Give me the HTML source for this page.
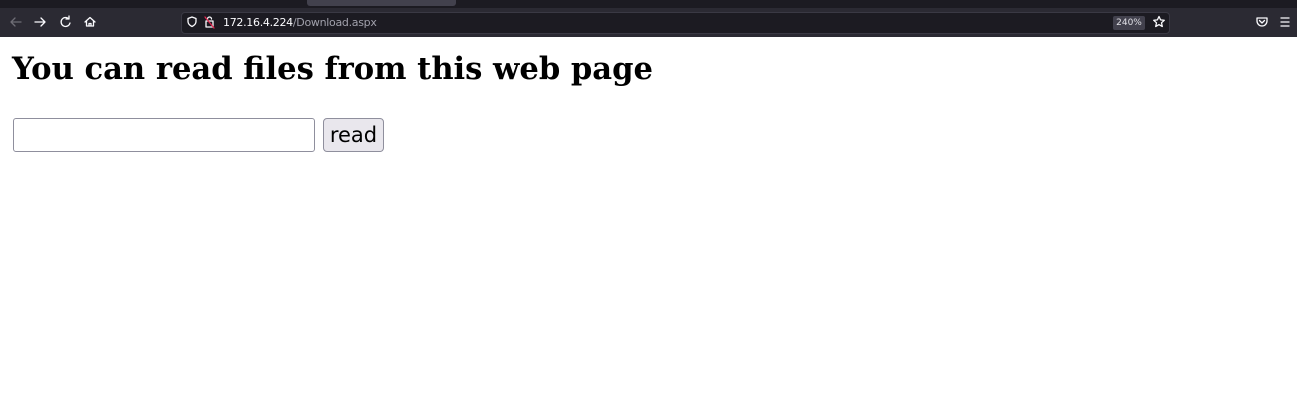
<!DOCTYPE html>
<html><head><style>
*{margin:0;padding:0;box-sizing:border-box}
body{width:1297px;height:403px;background:#fff;position:relative;overflow:hidden;font-family:"DejaVu Sans",sans-serif}
.tabs{position:absolute;left:0;top:0;width:1297px;height:8px;background:#1c1b22}
.tab{position:absolute;left:307px;top:0;width:149px;height:6px;background:#42414d;border-radius:0 0 3px 3px}
.tb{position:absolute;left:0;top:8px;width:1297px;height:29px;background:#2b2a33}
.url{position:absolute;left:181px;top:12px;width:989px;height:22px;background:#1c1b22;border:1px solid #3a3944;border-radius:4px}
.ut{position:absolute;left:223px;top:16px;font:11px "DejaVu Sans",sans-serif;color:#fbfbfe;letter-spacing:-0.3px}
.ut span{color:#a0a0ab}
.zoom{position:absolute;left:1113px;top:16px;width:32px;height:14px;background:#42414d;color:#e0e0e6;font:9px "DejaVu Sans",sans-serif;text-align:center;line-height:14px;border-radius:2px}
svg{position:absolute}
h1{position:absolute;left:12px;top:51px;font:bold 30.6px "DejaVu Serif",serif;white-space:nowrap}
.in{position:absolute;left:13px;top:118px;width:302px;height:34px;border:1px solid #8f8f9d;border-radius:3px}
.bt{position:absolute;left:323px;top:118px;width:61px;height:34px;border:1px solid #8f8f9d;border-radius:4px;background:#e9e7ed;font-size:21px;text-align:center;line-height:33px}
</style></head><body>
<div class="tabs"><div class="tab"></div></div>
<div class="tb"></div>
<div class="url"></div>
<svg width="1297" height="37" style="left:0;top:0" fill="none" stroke-width="1.3" stroke-linecap="round" stroke-linejoin="round">
<path d="M11 22h10M11 22l4-4M11 22l4 4" stroke="#6e6d75"/>
<path d="M35 22h10M45 22l-4-4M45 22l-4 4" stroke="#fbfbfe"/>
<path d="M69 19a4.5 4.5 0 1 0 1 4M69 16v3h-3" stroke="#fbfbfe"/>
<path d="M85 22l5-4.5 5 4.5M86.5 21v5h7v-5M89 26v-2.5h2V26" stroke="#fbfbfe"/>
<path d="M192 17l-4 1.5v3c0 2.5 2 4 4 5 2-1 4-2.5 4-5v-3z" stroke="#fbfbfe"/>
<path d="M206 21h7v6h-7zM207.5 21v-2a2 2 0 0 1 4 0" stroke="#fbfbfe"/><path d="M205 17l9 11" stroke="#e22850"/>
<path d="M1159 16.5l1.6 3.4 3.7.4-2.8 2.5.8 3.7-3.3-1.9-3.3 1.9.8-3.7-2.8-2.5 3.7-.4z" stroke="#fbfbfe"/>
<path d="M1257 18h10v3a5 5 0 0 1-10 0z" stroke="#fbfbfe"/><path d="M1259.5 20.5l2.5 2.5 2.5-2.5" stroke="#fbfbfe"/>
<path d="M1281 18h8M1281 22h8M1281 26h8" stroke="#fbfbfe"/>
</svg>
<div class="ut">172.16.4.224<span>/Download.aspx</span></div>
<div class="zoom">240%</div>
<h1>You can read files from this web page</h1>
<div class="in"></div>
<div class="bt">read</div>
</body></html>
